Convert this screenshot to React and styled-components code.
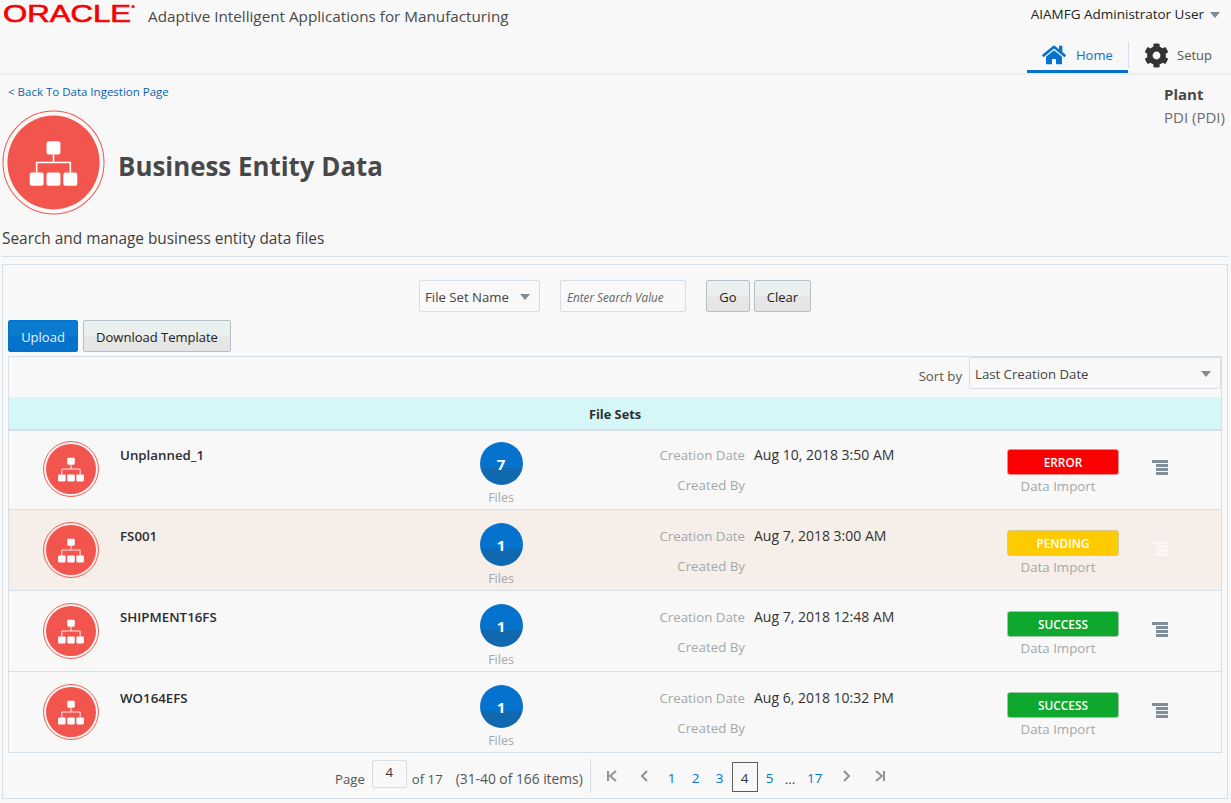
import React from "react";
import styled, { createGlobalStyle } from "styled-components";
import { FaHome, FaCog } from "react-icons/fa";

const GlobalStyle = createGlobalStyle`
  html, body {
    margin: 0;
    padding: 0;
    background: #f8f8f8;
    color: #333;
    font-family: "Open Sans", "Noto Sans", sans-serif;
    font-size: 13px;
    overflow: hidden;
  }
  * { box-sizing: border-box; }
`;

const Page = styled.div`
  width: 1231px;
  height: 803px;
  overflow: hidden;
`;

const Header = styled.header`
  height: 75px;
  border-bottom: 2px solid #e9eef0;
  display: flex;
  justify-content: space-between;
`;

const Brand = styled.div`
  display: flex;
  align-items: flex-start;
  padding-left: 3px;
`;

const LogoSvg = styled.svg`
  display: block;
  width: 136px;
  height: 32px;
`;

const AppTitle = styled.div`
  font-size: 15.25px;
  line-height: 22px;
  margin: 5px 0 0 9px;
  color: #4a4a4a;
`;

const HeaderRight = styled.div`
  width: 204px;
  display: flex;
  flex-direction: column;
  align-items: flex-end;
`;

const UserRow = styled.div`
  height: 38px;
  padding: 4px 11px 0 0;
  display: flex;
  align-items: flex-start;
  gap: 6px;
  font-size: 13.5px;
  line-height: 20px;
  white-space: nowrap;
  color: #222;
`;

const Caret = styled.span`
  width: 0;
  height: 0;
  margin-top: ${({ $top }) => $top || 8}px;
  border-left: 5px solid transparent;
  border-right: 5px solid transparent;
  border-top: 6px solid #808a91;
`;

const Tabs = styled.nav`
  display: flex;
  height: 35px;
  width: 204px;
`;

const Tab = styled.a`
  width: ${({ $w }) => $w}px;
  display: flex;
  align-items: center;
  gap: ${({ $gap }) => $gap}px;
  padding: 2px 0 0 ${({ $pad }) => $pad}px;
  font-size: 13px;
  color: ${({ $active }) => ($active ? "#0572ce" : "#555")};
  border-bottom: 3px solid ${({ $active }) => ($active ? "#0572ce" : "transparent")};
`;

const TabDivider = styled.span`
  width: 1px;
  height: 26px;
  margin-top: 4px;
  background: #d6dfe6;
`;

const TopInfo = styled.div`
  display: flex;
  justify-content: space-between;
  padding-bottom: 12px;
`;

const TitleBlock = styled.div`
  display: flex;
  flex-direction: column;
`;

const BackLink = styled.a`
  font-size: 11.5px;
  line-height: 16px;
  margin: 9px 0 0 8px;
  color: #0a62b0;
`;

const TitleRow = styled.div`
  display: flex;
  align-items: center;
  gap: 13px;
  margin: 10px 0 0 2px;
`;

const PageTitle = styled.h1`
  margin: 6px 0 0;
  font-size: 25.9px;
  line-height: 36px;
  font-weight: 700;
  color: #484848;
`;

const PlantBlock = styled.div`
  width: 67px;
  padding-top: 8px;
  line-height: 23px;
  font-size: 15px;
  white-space: nowrap;
  color: #6b6b6b;
`;

const PlantLabel = styled.div`
  font-weight: 700;
  color: #484848;
`;

const Subtitle = styled.div`
  margin: 0 3px 0 2px;
  height: 29px;
  font-size: 15.4px;
  line-height: 24px;
  color: #404040;
`;

const Divider = styled.div`
  margin: 0 3px 0 2px;
  border-top: 1px solid #d6dfe6;
`;

const Panel = styled.section`
  margin: 7px 3px 0 2px;
  height: 535px;
  border: 1px solid #d6dfe6;
  padding: 15px 5px 0 5px;
`;

const SearchRow = styled.div`
  display: flex;
  height: 32px;
  padding-left: 411px;
`;

const FieldBox = styled.div`
  display: flex;
  align-items: center;
  justify-content: space-between;
  width: ${({ $w }) => $w}px;
  height: 32px;
  border: 1px solid #d6dfe6;
  border-radius: 2px;
  padding: 1px 9px 0 5px;
  font-size: 13.2px;
  color: #444;
`;

const SearchInput = styled.input`
  width: 126px;
  height: 32px;
  margin-left: 20px;
  border: 1px solid #d6dfe6;
  border-radius: 2px;
  padding: 1px 6px 0;
  background: transparent;
  font-family: inherit;
  font-size: 11.7px;
  font-style: italic;
  &::placeholder { color: #666; opacity: 1; }
`;

const Button = styled.button`
  height: 32px;
  margin-left: ${({ $gap }) => $gap || 0}px;
  padding: 2px 0 0;
  width: ${({ $w }) => $w}px;
  border: 1px solid ${({ $primary }) => ($primary ? "#0572ce" : "#b5c1c9")};
  border-radius: 2px;
  background: ${({ $primary }) =>
    $primary
      ? "linear-gradient(#0a7bcf 0 50%, #0572ce 50%)"
      : "linear-gradient(#eaf0f0 0 50%, #e6e6e6 50%)"};
  color: ${({ $primary }) => ($primary ? "#e8f4fc" : "#222")};
  font-family: inherit;
  font-size: 13px;
`;

const ActionRow = styled.div`
  display: flex;
  margin-top: 8px;
`;

const TableBox = styled.div`
  margin-top: 4px;
  border: 1px solid #d6dfe6;
  border-bottom: 0;
`;

const SortRow = styled.div`
  display: flex;
  justify-content: flex-end;
  align-items: flex-start;
  height: 40px;
  gap: 7px;
`;

const SortLabel = styled.span`
  font-size: 13.2px;
  line-height: 20px;
  margin-top: 9px;
  color: #555;
`;

const TableHead = styled.div`
  position: relative;
  height: 34px;
  margin-bottom: -2px;
  background: #d5f7f8;
  border-bottom: 2px solid #d6dfe6;
  text-align: center;
  font-size: 12.8px;
  font-weight: 700;
  line-height: 34px;
  color: #2d2d33;
`;

const Row = styled.div`
  display: grid;
  grid-template-columns: 111px 320px 122px 183px 262px 112px 1fr;
  height: 81px;
  border-bottom: 1px solid #d6dfe6;
  background: ${({ $pending }) => ($pending ? "#f6eee8" : "transparent")};
`;

const IconCell = styled.div`
  padding: 12px 0 0 34px;
`;

const Name = styled.div`
  padding-top: 16px;
  font-size: 13.3px;
  font-weight: 600;
  line-height: 20px;
  color: #2c2c33;
`;

const FilesCell = styled.div`
  display: flex;
  flex-direction: column;
  align-items: center;
  padding-top: 13px;
`;

const CountBadge = styled.div`
  width: 43px;
  height: 43px;
  border-radius: 50%;
  background: linear-gradient(#0572ce 0 60%, #1068ae 60%);
  color: #fff;
  font-size: 15px;
  font-weight: 700;
  text-align: center;
  line-height: 44px;
`;

const MutedText = styled.div`
  font-size: 13.3px;
  line-height: 20px;
  color: #a3a8ac;
`;

const FilesLabel = styled(MutedText)`
  margin-top: 3px;
  font-size: 12.5px;
`;

const MetaLabels = styled.div`
  display: flex;
  flex-direction: column;
  align-items: flex-end;
  gap: 10px;
  padding-top: 16px;
`;

const MetaValue = styled.div`
  padding: 16px 0 0 9px;
  font-size: 14px;
  line-height: 20px;
  color: #333;
`;

const StatusCell = styled.div`
  display: flex;
  flex-direction: column;
  align-items: center;
  padding-top: 20px;
`;

const StatusPill = styled.div`
  width: 112px;
  height: 26px;
  border-radius: 3px;
  border: 1px solid ${({ $border }) => $border};
  background: ${({ $color }) => $color};
  color: #fff;
  text-align: center;
  font-size: 11.8px;
  font-weight: 600;
  line-height: 24px;
`;

const ImportLabel = styled(MutedText)`
  margin: 1px 10px 0 0;
`;

const MenuCell = styled.div`
  padding: 31px 0 0 33px;
`;

const Pager = styled.div`
  display: flex;
  align-items: flex-start;
  height: 44px;
  padding-left: 327px;
  font-size: 13.2px;
  color: #555;
`;

const PageLabel = styled.span`
  line-height: 20px;
  white-space: nowrap;
  margin-top: 16px;
  margin-left: ${({ $left }) => $left || 0}px;
`;

const ItemsLabel = styled(PageLabel)`
  font-size: 13.8px;
`;

const PageInput = styled.div`
  width: 35px;
  height: 28px;
  margin: 7px 0 0 7px;
  border: 1px solid #d6dfe6;
  border-radius: 2px;
  text-align: center;
  line-height: 22px;
  color: #333;
`;

const PagerDivider = styled.span`
  width: 1px;
  height: 34px;
  margin: 6px 0 0 7px;
  background: #d6dfe6;
`;

const PagerNav = styled.span`
  width: 12px;
  margin-left: ${({ $left }) => $left || 0}px;
  padding-top: 17px;
`;

const PageNum = styled.a`
  width: ${({ $w }) => $w || 24}px;
  text-align: center;
  height: 30px;
  margin: 9px 0 0 ${({ $left }) => $left || 0}px;
  font-size: 13.5px;
  color: ${({ $current }) => ($current ? "#333" : "#0572ce")};
  border: ${({ $current }) => ($current ? "1px solid #5f5f57" : "0")};
  line-height: ${({ $current }) => ($current ? "30px" : "32px")};
`;

const Ellipsis = styled.span`
  margin: 9px 0 0 3px;
  width: 15px;
  line-height: 34px;
  color: #444;
`;

function OracleLogo() {
  return (
    <LogoSvg viewBox="0 0 136 32">
      <text
        x="0"
        y="21.7"
        textLength="128"
        lengthAdjust="spacingAndGlyphs"
        fontFamily="Liberation Sans, sans-serif"
        fontSize="23"
        fill="#f80000"
        stroke="#f80000"
        strokeWidth="0.6"
      >
        ORACLE
      </text>
      <circle cx="130" cy="6.5" r="1.6" fill="#f80000" />
    </LogoSvg>
  );
}

function EntityIcon({ w = 56, h = 56, thin }) {
  return (
    <svg width={w} height={h} viewBox="0 0 104 104" preserveAspectRatio="none" style={{ display: "block" }}>
      <circle cx="52" cy="52" r="51" fill="none" stroke="#f2554e" strokeWidth={thin ? 1 : 1.8} />
      <circle cx="52" cy="52" r="46.5" fill="#f2554e" />
      <rect x="45" y="31" width="14" height="13" rx="2" fill="#fff" />
      <path d="M52 44v8M35 62v-10h34v10" fill="none" stroke="#fff" strokeWidth="1.6" />
      <rect x="28" y="62" width="14" height="13" rx="2" fill="#fff" />
      <rect x="45" y="62" width="14" height="13" rx="2" fill="#fff" />
      <rect x="62" y="62" width="14" height="13" rx="2" fill="#fff" />
    </svg>
  );
}

function MenuIcon({ color }) {
  return (
    <svg width="17" height="15" viewBox="0 0 17 15" style={{ display: "block" }}>
      <rect x="0" y="0" width="16" height="3" fill={color} />
      <rect x="4" y="4" width="12" height="3" fill={color} />
      <rect x="4" y="8" width="12" height="3" fill={color} />
      <rect x="4" y="12" width="12" height="3" fill={color} />
    </svg>
  );
}

function NavIcon({ d }) {
  return (
    <svg width="12" height="12" viewBox="0 0 12 12" style={{ display: "block" }}>
      <path d={d} fill="none" stroke="#8b949b" strokeWidth="2" />
    </svg>
  );
}

const fileSets = [
  { name: "Unplanned_1", count: 7, date: "Aug 10, 2018 3:50 AM", status: "ERROR", color: "#fb0000", border: "#e0908c" },
  { name: "FS001", count: 1, date: "Aug 7, 2018 3:00 AM", status: "PENDING", color: "#fecb00", border: "#d8c98c", pending: true },
  { name: "SHIPMENT16FS", count: 1, date: "Aug 7, 2018 12:48 AM", status: "SUCCESS", color: "#0fa82e", border: "#9cc6a4" },
  { name: "WO164EFS", count: 1, date: "Aug 6, 2018 10:32 PM", status: "SUCCESS", color: "#0fa82e", border: "#9cc6a4" },
];

export default function App() {
  return (
    <Page>
      <GlobalStyle />
      <Header>
        <Brand>
          <OracleLogo />
          <AppTitle>Adaptive Intelligent Applications for Manufacturing</AppTitle>
        </Brand>
        <HeaderRight>
          <UserRow>
            AIAMFG Administrator User
            <Caret />
          </UserRow>
          <Tabs>
            <Tab $active $w={101} $gap={10} $pad={15}>
              <FaHome size={24} />
              Home
            </Tab>
            <TabDivider />
            <Tab $w={102} $gap={8} $pad={15}>
              <FaCog size={25} color="#333" />
              Setup
            </Tab>
          </Tabs>
        </HeaderRight>
      </Header>

      <TopInfo>
        <TitleBlock>
          <BackLink>&lt; Back To Data Ingestion Page</BackLink>
          <TitleRow>
            <EntityIcon w={103} h={105} thin />
            <PageTitle>Business Entity Data</PageTitle>
          </TitleRow>
        </TitleBlock>
        <PlantBlock>
          <PlantLabel>Plant</PlantLabel>
          PDI (PDI)
        </PlantBlock>
      </TopInfo>
      <Subtitle>Search and manage business entity data files</Subtitle>
      <Divider />

      <Panel>
        <SearchRow>
          <FieldBox $w={121}>
            File Set Name
            <Caret $top={1} />
          </FieldBox>
          <SearchInput placeholder="Enter Search Value" />
          <Button $w={44} $gap={20}>Go</Button>
          <Button $w={57} $gap={4}>Clear</Button>
        </SearchRow>
        <ActionRow>
          <Button $primary $w={70}>Upload</Button>
          <Button $w={148} $gap={5}>Download Template</Button>
        </ActionRow>
        <TableBox>
          <SortRow>
            <SortLabel>Sort by</SortLabel>
            <FieldBox $w={252}>
              Last Creation Date
              <Caret $top={1} />
            </FieldBox>
          </SortRow>
          <TableHead>File Sets</TableHead>
          {fileSets.map((f) => (
            <Row key={f.name} $pending={f.pending}>
              <IconCell>
                <EntityIcon />
              </IconCell>
              <Name>{f.name}</Name>
              <FilesCell>
                <CountBadge>{f.count}</CountBadge>
                <FilesLabel>Files</FilesLabel>
              </FilesCell>
              <MetaLabels>
                <MutedText>Creation Date</MutedText>
                <MutedText>Created By</MutedText>
              </MetaLabels>
              <MetaValue>{f.date}</MetaValue>
              <StatusCell>
                <StatusPill $color={f.color} $border={f.border}>{f.status}</StatusPill>
                <ImportLabel>Data Import</ImportLabel>
              </StatusCell>
              <MenuCell>
                <MenuIcon color={f.pending ? "#faf7f4" : "#7f8e98"} />
              </MenuCell>
            </Row>
          ))}
        </TableBox>
        <Pager>
          <PageLabel>Page</PageLabel>
          <PageInput>4</PageInput>
          <PageLabel $left={5}>of 17</PageLabel>
          <ItemsLabel $left={13}>(31-40 of 166 items)</ItemsLabel>
          <PagerDivider />
          <PagerNav $left={15}><NavIcon d="M2 1v10M10 1L4 6l6 5" /></PagerNav>
          <PagerNav $left={20}><NavIcon d="M9 1L4 6l5 5" /></PagerNav>
          <PageNum $left={10}>1</PageNum>
          <PageNum>2</PageNum>
          <PageNum>3</PageNum>
          <PageNum $current $w={26}>4</PageNum>
          <PageNum>5</PageNum>
          <Ellipsis>...</Ellipsis>
          <PageNum $w={30}>17</PageNum>
          <PagerNav $left={11}><NavIcon d="M3 1l5 5-5 5" /></PagerNav>
          <PagerNav $left={21}><NavIcon d="M10 1v10M2 1l6 5-6 5" /></PagerNav>
        </Pager>
      </Panel>
    </Page>
  );
}
